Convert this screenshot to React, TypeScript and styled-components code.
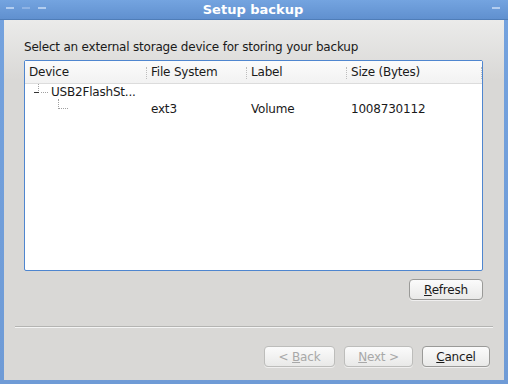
import styled, { createGlobalStyle } from "styled-components";

const GlobalStyle = createGlobalStyle`
  html, body {
    margin: 0;
    padding: 0;
    background: #6f9bd6;
  }
  body {
    font-family: "DejaVu Sans", sans-serif;
    font-size: 12px;
    letter-spacing: -0.2px;
    color: #1a1a1a;
  }
`;

const columns = [
  { title: "Device", width: 122 },
  { title: "File System", width: 100 },
  { title: "Label", width: 100 },
  { title: "Size (Bytes)", width: 133 },
];

const rows = [
  { device: "USB2FlashSt...", fs: "", label: "", size: "", level: 0 },
  { device: "", fs: "ext3", label: "Volume", size: "1008730112", level: 1 },
];

export default function App() {
  return (
    <>
      <GlobalStyle />
      <Window>
        <TitleBar>
          <Dashes>
            <Dash />
            <Dash $dim />
            <Dash />
          </Dashes>
          <Title>Setup backup</Title>
          <Dashes>
            <Dash />
          </Dashes>
        </TitleBar>
        <Client>
          <Prompt>Select an external storage device for storing your backup</Prompt>
          <Tree>
            <HeaderRow>
              {columns.map((c) => (
                <HeaderCell key={c.title} style={{ width: c.width }}>
                  {c.title}
                </HeaderCell>
              ))}
            </HeaderRow>
            {rows.map((r, i) => (
              <Row key={i}>
                <Cell style={{ width: columns[0].width }}>
                  {r.level === 0 ? (
                    <Branch>
                      <Minus />
                      <DotH />
                      {r.device}
                    </Branch>
                  ) : (
                    <Leaf />
                  )}
                </Cell>
                <Cell style={{ width: columns[1].width }}>{r.fs}</Cell>
                <Cell style={{ width: columns[2].width }}>{r.label}</Cell>
                <Cell style={{ width: columns[3].width }}>{r.size}</Cell>
              </Row>
            ))}
          </Tree>
          <RefreshRow>
            <Button>
              <u>R</u>efresh
            </Button>
          </RefreshRow>
          <Separator />
          <ButtonRow>
            <Button disabled $w={71}>
              &lt; <u>B</u>ack
            </Button>
            <Button disabled $w={69}>
              <u>N</u>ext &gt;
            </Button>
            <Button $w={68}>
              <u>C</u>ancel
            </Button>
          </ButtonRow>
        </Client>
      </Window>
    </>
  );
}

const Window = styled.div`
  width: 508px;
  height: 384px;
  box-sizing: border-box;
  padding: 0 4px 4px 4px;
  background: linear-gradient(#74a2de, #6f9bd6);
  display: flex;
  flex-direction: column;
`;

const TitleBar = styled.div`
  height: 20px;
  margin: 0 -4px;
  padding: 0 8px 0 6px;
  box-sizing: border-box;
  border-bottom: 1px solid #4f7db8;
  background: linear-gradient(#74a4e0, #6090cf);
  display: flex;
  align-items: center;
  justify-content: space-between;
`;

const Dashes = styled.div`
  display: flex;
  gap: 8px;
  width: 48px;
  &:last-child {
    justify-content: flex-end;
  }
`;

const Dash = styled.div<{ $dim?: boolean }>`
  width: 8px;
  height: 2px;
  margin-top: -3px;
  background: ${(p) => (p.$dim ? "#8fb3e4" : "#b3cdef")};
`;

const Title = styled.div`
  color: #ffffff;
  font-weight: bold;
  font-size: 13px;
  letter-spacing: 0;
  margin-top: -1px;
`;

const Client = styled.div`
  flex: 1;
  background: linear-gradient(#ebebea 0px, #d9d8d6 60px);
  padding: 19px 20px 0 20px;
  display: flex;
  flex-direction: column;
`;

const Prompt = styled.div`
  height: 21px;
  line-height: 16px;
`;

const Tree = styled.div`
  height: 211px;
  margin-right: 1px;
  background: #ffffff;
  border: 1px solid #4f86cf;
  border-radius: 2px;
  box-sizing: border-box;
`;

const HeaderRow = styled.div`
  display: flex;
  height: 22px;
  background: linear-gradient(#fbfbfb, #f2f2f2);
  border-bottom: 1px solid #dcdcdc;
`;

const HeaderCell = styled.div`
  box-sizing: border-box;
  padding-left: 4px;
  line-height: 23px;
  position: relative;
  &:last-child {
    flex: 1;
  }
  &::after {
    content: "";
    position: absolute;
    right: 0;
    top: 6px;
    height: 12px;
    border-right: 1px dotted #bdbdbd;
  }
`;

const Row = styled.div`
  display: flex;
  height: 17px;
  line-height: 17px;
`;

const Cell = styled.div`
  box-sizing: border-box;
  padding-left: 4px;
  white-space: nowrap;
  position: relative;
`;

const Branch = styled.div`
  display: flex;
  align-items: center;
  padding-left: 5px;
`;

const Minus = styled.span`
  display: inline-block;
  width: 5px;
  height: 1px;
  background: #333;
  position: relative;
  &::before {
    content: "";
    position: absolute;
    left: 4px;
    top: -8px;
    height: 7px;
    border-left: 1px dotted #a0a0a0;
  }
`;

const DotH = styled.span`
  display: inline-block;
  width: 7px;
  height: 0;
  margin: 0 3px 0 2px;
  border-top: 1px dotted #a0a0a0;
`;

const Leaf = styled.div`
  position: absolute;
  left: 33px;
  top: -2px;
  width: 9px;
  height: 9px;
  border-left: 1px dotted #a0a0a0;
  border-bottom: 1px dotted #a0a0a0;
`;

const RefreshRow = styled.div`
  display: flex;
  justify-content: flex-end;
  margin-top: 8px;
  margin-right: 1px;
`;

const Button = styled.button<{ $w?: number }>`
  width: ${(p) => (p.$w ? `${p.$w}px` : "74px")};
  height: 21px;
  padding: 0;
  font-family: "DejaVu Sans", sans-serif;
  font-size: 12px;
  letter-spacing: -0.2px;
  color: ${(p) => (p.disabled ? "#a8a8a8" : "#1a1a1a")};
  background: linear-gradient(#fbfbfb, #e9e9e8);
  border: 1px solid ${(p) => (p.disabled ? "#bdbdbb" : "#9a9a98")};
  border-radius: 4px;
  box-shadow: 0 1px 0 rgba(255, 255, 255, 0.6);
  u {
    text-decoration: underline;
  }
`;

const Separator = styled.div`
  height: 1px;
  margin: 26px -9px 0 -9px;
  background: #b4b4b2;
  border-bottom: 1px solid #f4f4f4;
`;

const ButtonRow = styled.div`
  display: flex;
  justify-content: flex-end;
  gap: 9px;
  margin-top: 18px;
  margin-right: -6px;
`;
